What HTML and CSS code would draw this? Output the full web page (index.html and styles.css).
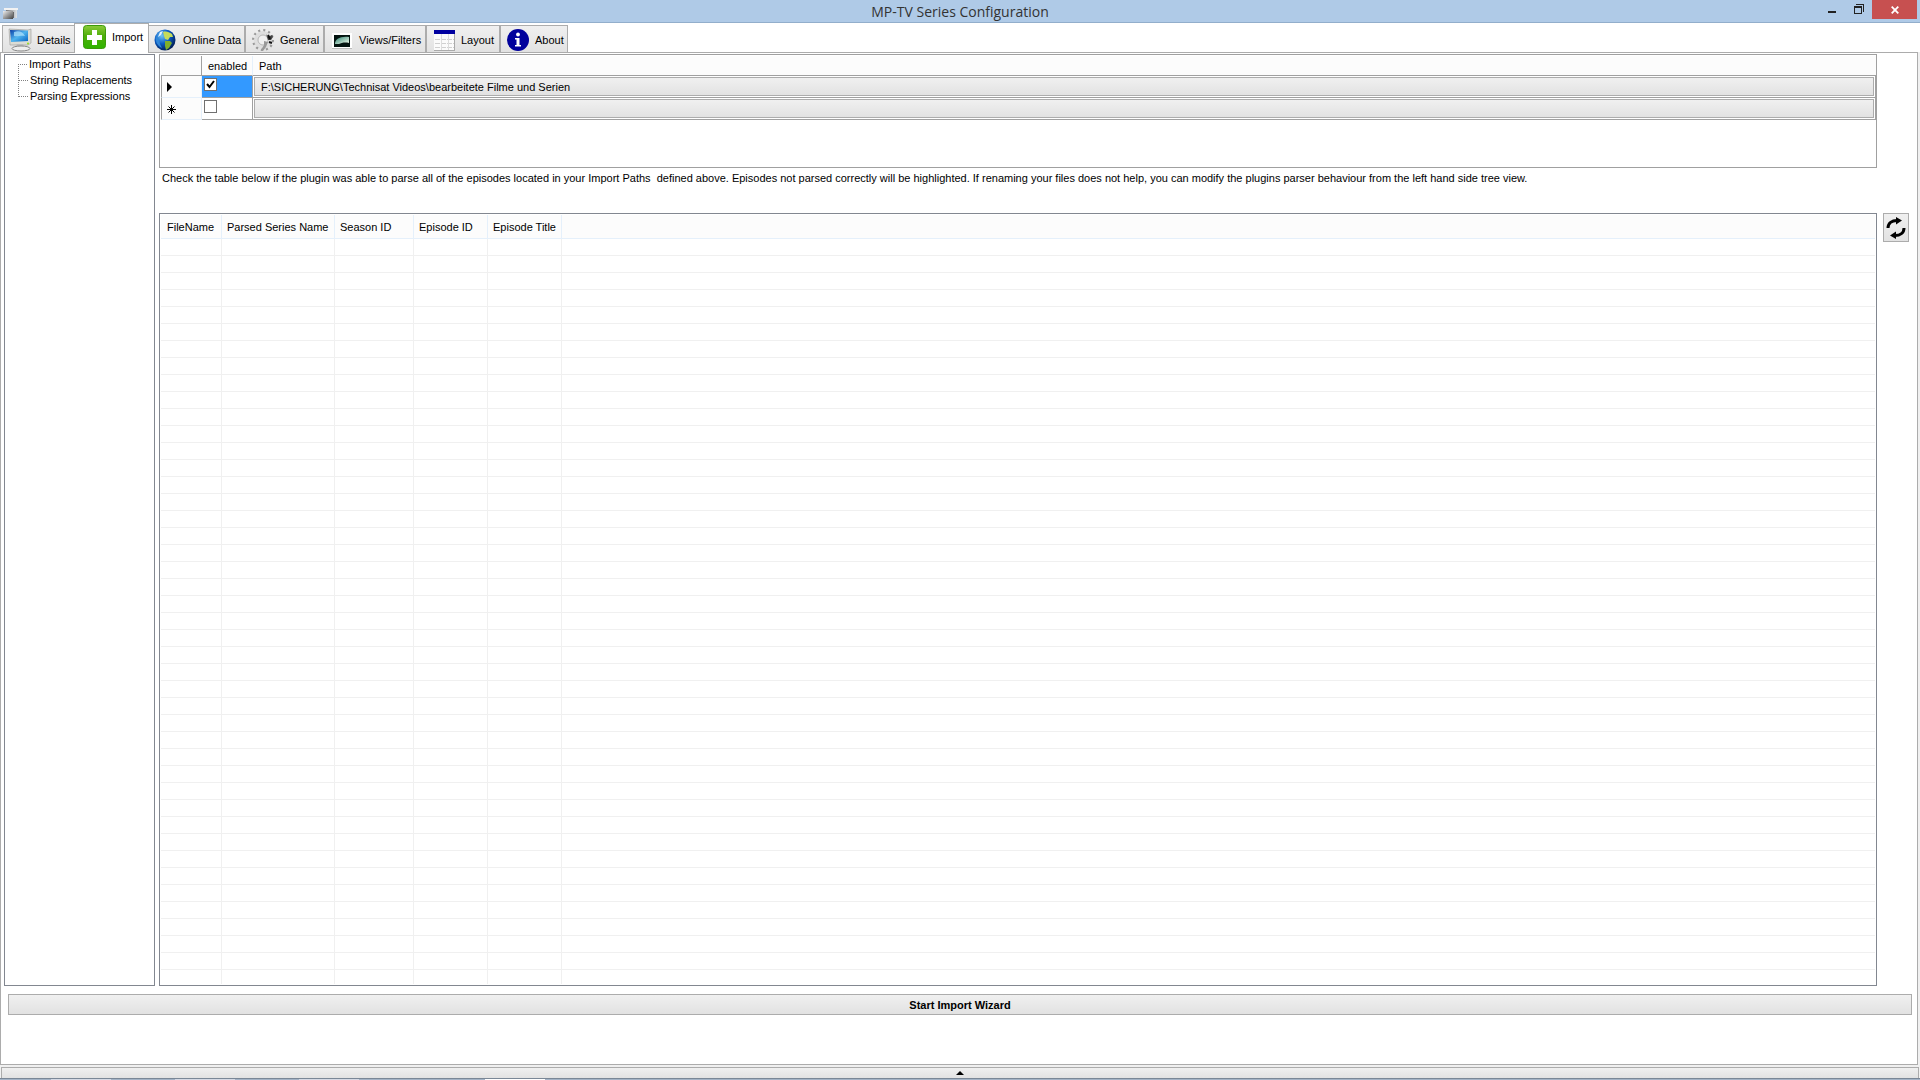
FILE: index.html
```html
<!DOCTYPE html>
<html lang="en">
<head>
  <meta charset="utf-8">
  <title>MP-TV Series Configuration</title>
  <link rel="stylesheet" href="styles.css">
</head>
<body>
  <header class="titlebar">
    <svg class="app-icon" width="16" height="12" viewBox="0 0 16 12">
      <defs>
        <linearGradient id="appA" x1="0" y1="0" x2="1" y2="1"><stop offset="0" stop-color="#eee"/><stop offset="1" stop-color="#444"/></linearGradient>
        <linearGradient id="appB" x1="0" y1="0" x2="1" y2="0"><stop offset="0" stop-color="#777"/><stop offset="1" stop-color="#dde2e6"/></linearGradient>
      </defs>
      <rect x="3" y="0" width="11" height="10" fill="url(#appB)"/>
      <rect x="1" y="0" width="14" height="2" fill="#f2f2f2"/>
      <rect x="0" y="3" width="10" height="8" fill="url(#appA)"/>
      <rect x="10" y="4" width="1" height="6" fill="#666"/>
    </svg>
    <h1>MP-TV Series Configuration</h1>
    <div class="window-buttons">
      <button class="win-btn" aria-label="Minimize">
        <svg width="10" height="10" viewBox="0 0 10 10"><rect x="1" y="7" width="8" height="2" fill="#222"/></svg>
      </button>
      <button class="win-btn" aria-label="Restore">
        <svg width="10" height="10" viewBox="0 0 10 10" shape-rendering="crispEdges">
          <path d="M2 0h8v8h-1V1H2z M0 2h8v8H0z M1 4v5h6V4z" fill="#222" fill-rule="evenodd"/>
        </svg>
      </button>
      <button class="win-btn close" aria-label="Close">
        <svg width="8" height="8" viewBox="0 0 8 8"><path d="M.7.7l6.6 6.6M7.3.7L.7 7.3" stroke="#fff" stroke-width="1.8"/></svg>
      </button>
    </div>
  </header>

  <nav class="tabs">
    <button class="tab tab-details">
      <svg width="24" height="24" viewBox="0 0 24 24">
        <defs>
          <linearGradient id="scr" x1="0" y1="0" x2="1" y2="1"><stop offset="0" stop-color="#0a3fa8"/><stop offset=".5" stop-color="#4fb4ee"/><stop offset="1" stop-color="#0561c4"/></linearGradient>
        </defs>
        <path d="M1 1l19 1 3-1v14l-3 2H2z" fill="#dcdcd4" stroke="#999" stroke-width=".6"/>
        <path d="M2 2l18 .6V13L3 14z" fill="url(#scr)"/>
        <path d="M6 4c5-2 9 0 11 4-4-1-8 1-11 0z" fill="#a5dcfa" opacity=".8"/>
        <path d="M9 16h6l1 3H8z" fill="#bbb"/>
        <ellipse cx="13" cy="20.500" rx="9" ry="2.500" fill="#eee" stroke="#888" stroke-width="1"/>
        <circle cx="20" cy="15.500" r="1" fill="#8fe020"/>
      </svg>
      Details
    </button>
    <button class="tab tab-import active">
      <svg width="24" height="24" viewBox="0 0 24 24">
        <defs>
          <linearGradient id="grn" x1="0" y1="0" x2="0" y2="1"><stop offset="0" stop-color="#8ccb3a"/><stop offset=".45" stop-color="#4fae0a"/><stop offset="1" stop-color="#2fb400"/></linearGradient>
        </defs>
        <rect x=".5" y=".5" width="22" height="23" rx="3" fill="url(#grn)" stroke="#3c9a0a"/>
        <path d="M9 5h5v5h5v5h-5v5H9v-5H4v-5h5z" fill="#fff"/>
      </svg>
      Import
    </button>
    <button class="tab tab-online">
      <svg width="24" height="24" viewBox="0 0 24 24">
        <defs>
          <radialGradient id="sea" cx=".35" cy=".3" r=".75"><stop offset="0" stop-color="#6ec4f4"/><stop offset=".5" stop-color="#0b5cc4"/><stop offset="1" stop-color="#001a50"/></radialGradient>
        </defs>
        <circle cx="11" cy="12" r="10.500" fill="url(#sea)"/>
        <path d="M9 4c3-1 6 0 9 2l1 3-3 0-2 3-3-1-1-3z" fill="#c5dc5a"/>
        <path d="M11 13l5 0 2 2-3 5-3 2-1-4z" fill="#7fae2c"/>
        <path d="M2 9l3 2 1 5 2 4c-4-2-7-6-6-11z" fill="#2f86d8"/>
        <path d="M6 4l3-1-2 4-3 2z" fill="#e4f4ff"/>
      </svg>
      Online Data
    </button>
    <button class="tab tab-general">
      <svg width="24" height="24" viewBox="0 0 24 24">
        <circle cx="12" cy="12" r="9.500" fill="none" stroke="#999" stroke-width="3" stroke-dasharray="2 2.970"/>
        <circle cx="12" cy="12" r="7" fill="none" stroke="#dedede" stroke-width="4"/>
        <circle cx="12" cy="12" r="5" fill="#f0f0f0" stroke="#aaa" stroke-width=".8"/>
        <path d="M15 6l2 3 4-2 1 2-2 3-3 0z" fill="#444"/>
        <path d="M13 13l4 1-2 5-3 4-2-1 3-5z" fill="#999"/>
        <path d="M17 7l2 4M18 14l3 1" stroke="#111" stroke-width="2"/>
      </svg>
      General
    </button>
    <button class="tab tab-views">
      <svg width="24" height="24" viewBox="0 0 24 24">
        <defs>
          <linearGradient id="pic" x1="0" y1="0" x2="1" y2="1"><stop offset="0" stop-color="#2c8371"/><stop offset="1" stop-color="#f8fff0"/></linearGradient>
        </defs>
        <rect x="2" y="5" width="20" height="16" fill="#fff"/>
        <rect x="2" y="20" width="20" height="1" fill="#bbb"/>
        <rect x="4" y="7" width="16" height="12" fill="#031310"/>
        <path d="M5 16c0-5 5-8 14-7v6c-4-1-8 0-10 1z" fill="url(#pic)"/>
      </svg>
      Views/Filters
    </button>
    <button class="tab tab-layout">
      <svg width="24" height="24" viewBox="0 0 24 24" shape-rendering="crispEdges">
        <rect x="2" y="2" width="21" height="21" fill="#fbfbfb"/>
        <rect x="2" y="2" width="21" height="4" fill="#0000a0"/>
        <path d="M3 11.500h20M3 15.500h20M3 19.500h20" stroke="#d0d0d0" stroke-dasharray="5 1"/>
        <path d="M9.500 6v17M16.500 6v17" stroke="#ddd"/>
        <path d="M22.500 6v17M2 22.500h21" stroke="#aaa"/>
      </svg>
      Layout
    </button>
    <button class="tab tab-about">
      <svg width="24" height="24" viewBox="0 0 24 24">
        <circle cx="12" cy="12" r="11" fill="#00009c"/>
        <circle cx="12" cy="6.500" r="1.900" fill="#fff"/>
        <path d="M9 10h4.500v7H15v1.500H9V17h1.500v-5.500H9z" fill="#fff"/>
      </svg>
      About
    </button>
  </nav>

  <main class="page">
    <div class="content">
      <ul class="tree">
        <li><a href="#">Import Paths</a></li>
        <li><a href="#">String Replacements</a></li>
        <li><a href="#">Parsing Expressions</a></li>
      </ul>

      <section class="panel">
        <div class="paths">
          <table class="paths-table">
            <thead>
              <tr><th class="col-mark"></th><th class="col-enabled">enabled</th><th>Path</th></tr>
            </thead>
            <tbody>
              <tr>
                <td class="mark"><svg width="16" height="12" viewBox="0 0 16 12"><path d="M4 1l5 5-5 5z"/></svg></td>
                <td class="selected"><input type="checkbox" aria-label="enabled" checked></td>
                <td><button class="path-btn">F:\SICHERUNG\Technisat Videos\bearbeitete Filme und Serien</button></td>
              </tr>
              <tr>
                <td class="mark"><svg width="16" height="12" viewBox="0 0 16 12"><path d="M8.500 2v9M4 6.500h9M5.500 3.500l6 6M11.500 3.500l-6 6" stroke="#000"/></svg></td>
                <td><input type="checkbox" aria-label="enabled"></td>
                <td><button class="path-btn" aria-label="New path"></button></td>
              </tr>
            </tbody>
          </table>
        </div>

        <p class="hint">Check the table below if the plugin was able to parse all of the episodes located in your Import Paths&nbsp; defined above. Episodes not parsed correctly will be highlighted. If renaming your files does not help, you can modify the plugins parser behaviour from the left hand side tree view.</p>

        <div class="results">
          <div class="list">
            <table class="list-table">
              <thead>
                <tr>
                  <th class="col-file">FileName</th>
                  <th class="col-series">Parsed Series Name</th>
                  <th class="col-season">Season ID</th>
                  <th class="col-episode">Episode ID</th>
                  <th class="col-episode">Episode Title</th>
                  <th></th>
                </tr>
              </thead>
              <tbody>
                <tr><td></td><td></td><td></td><td></td><td></td><td></td></tr>
              </tbody>
            </table>
          </div>
          <button class="refresh" aria-label="Refresh">
            <svg width="20" height="22" viewBox="0 0 20 22">
              <path d="M2 11c0-5 4-7.500 9-7.500" fill="none" stroke="#000" stroke-width="3"/>
              <path d="M10 0l6 3.500-6 4z"/>
              <path d="M18 11c0 5-4 7.500-9 7.500" fill="none" stroke="#000" stroke-width="3"/>
              <path d="M10 14.500l-6 4 6 3.500z"/>
            </svg>
          </button>
        </div>
      </section>
    </div>
    <button class="wizard">Start Import Wizard</button>
  </main>

  <button class="expander" aria-label="Show log">
    <svg width="8" height="4" viewBox="0 0 8 4"><path d="M4 0l4 4H0z"/></svg>
  </button>
  <footer class="taskbar">
    <span class="task"></span>
    <span class="task"></span>
    <span class="task"></span>
    <span class="task current"></span>
  </footer>
</body>
</html>
```

FILE: styles.css
```css
* {
  box-sizing: border-box;
}

body {
  margin: 0;
  height: 100vh;
  display: flex;
  flex-direction: column;
  overflow: hidden;
  background-color: #f0f0f0;
  color: #000;
  font-family: "Liberation Sans", Arial, sans-serif;
  font-size: 11px;
  line-height: 16px;
}

button {
  font: inherit;
  color: inherit;
  padding: 0;
  border: 1px solid #acacac;
  background: linear-gradient(#f0f0f0, #e2e2e2);
}

svg {
  display: block;
  flex: none;
}

table {
  width: 100%;
  border-collapse: separate;
  border-spacing: 0;
  table-layout: fixed;
}

th {
  font-weight: normal;
  text-align: left;
  background-color: #fcfcfc;
}

/* Title bar */
.titlebar {
  display: grid;
  grid-template-columns: 1fr auto 1fr;
  height: 23px;
  padding: 0 3px;
  background-color: #afcae7;
  border-bottom: 1px solid #92aecb;
}

.app-icon {
  align-self: center;
  margin-top: 3px;
}

.titlebar h1 {
  margin: 0;
  font-family: "Open Sans", sans-serif;
  font-size: 14px;
  font-weight: normal;
  line-height: 24px;
  color: #333;
}

.window-buttons {
  display: flex;
  justify-content: flex-end;
}

.win-btn {
  display: flex;
  align-items: center;
  justify-content: center;
  width: 27px;
  height: 18px;
  border: none;
  background: none;
}

.win-btn.close {
  width: 45px;
  height: 19px;
  background-color: #c75050;
}

/* Tabs */
.tabs {
  display: flex;
  align-items: flex-end;
  height: 29px;
  padding-left: 2px;
  background-color: #fff;
}

.tab {
  display: flex;
  align-items: center;
  gap: 5px;
  height: 27px;
  padding: 1px 0 0 5px;
  border-bottom: none;
  white-space: nowrap;
}

.tab.active {
  position: relative;
  height: 30px;
  margin: 0 -1px -1px;
  padding: 0 0 4px 8px;
  background: #fff;
}

.tab-details {
  width: 73px;
}

.tab-import {
  width: 75px;
}

.tab-online {
  width: 97px;
}

.tab-general {
  width: 79px;
}

.tab-views {
  width: 102px;
}

.tab-layout {
  width: 74px;
}

.tab-about {
  width: 68px;
}

/* Tab page */
.page {
  flex: 1;
  display: flex;
  flex-direction: column;
  min-height: 0;
  margin-right: 2px;
  padding: 1px 5px 49px 3px;
  border: 1px solid #acacac;
  background-color: #fff;
}

.content {
  flex: 1;
  display: flex;
  gap: 4px;
  min-height: 0;
}

.tree {
  width: 151px;
  margin: 0;
  padding: 1px 0 0 13px;
  border: 1px solid #828790;
  list-style: none;
}

.tree li {
  display: flex;
  height: 16px;
}

.tree li::before {
  content: "";
  width: 9px;
  height: 16px;
  margin: -8px 2px 0 0;
  border-left: 1px dotted #808080;
  border-bottom: 1px dotted #808080;
}

.tree li:first-child::before {
  height: 1px;
  margin-top: 7px;
  border-left: none;
}

.tree a {
  color: #000;
  text-decoration: none;
  white-space: nowrap;
}

.panel {
  flex: 1;
  display: flex;
  flex-direction: column;
  min-width: 0;
}

/* Import paths */
.paths {
  height: 114px;
  margin-right: 35px;
  padding: 1px 0 0 1px;
  border: 1px solid #a0a0a0;
}

.paths-table th {
  height: 20px;
  padding: 0 6px;
  border-bottom: 1px solid #a0a0a0;
}

.paths-table .col-mark {
  width: 41px;
  border-right: 1px solid #a0a0a0;
}

.paths-table .col-enabled {
  width: 51px;
  border-right: 1px solid #e5f0fb;
}

.paths-table td {
  height: 22px;
  padding: 1px;
  vertical-align: top;
  border-right: 1px solid #a0a0a0;
  border-bottom: 1px solid #a0a0a0;
}

.paths-table .mark {
  padding: 5px 0 0 1px;
  background-color: #fcfcfc;
  border-left: 1px solid #a0a0a0;
  border-right-color: #e5f0fb;
  border-bottom-color: #e5f0fb;
}

.paths-table .selected {
  background-color: #3399ff;
}

.paths-table input {
  appearance: none;
  display: block;
  width: 13px;
  height: 13px;
  margin: 1px;
  border: 1px solid #707070;
  background-color: #fff;
}

.paths-table input:checked {
  background-image: url("data:image/svg+xml,%3Csvg xmlns='http://www.w3.org/2000/svg' viewBox='0 0 11 11'%3E%3Cpath d='M2 5l2.500 3L9 2' fill='none' stroke='%23000' stroke-width='2'/%3E%3C/svg%3E");
}

.path-btn {
  display: block;
  width: 100%;
  height: 19px;
  padding-left: 6px;
  text-align: left;
}

.hint {
  height: 45px;
  margin: 0;
  padding: 2px 3px 0;
}

/* Parsed episodes */
.results {
  flex: 1;
  display: flex;
  align-items: flex-start;
  gap: 6px;
  min-height: 0;
  padding-right: 3px;
}

.list {
  flex: 1;
  align-self: stretch;
  padding: 1px;
  border: 1px solid #828790;
}

.list-table {
  height: 100%;
}

.list-table th {
  height: 24px;
  padding: 1px 0 0 6px;
  border-right: 1px solid #e5f0fb;
  border-bottom: 1px solid #e5f0fb;
  white-space: nowrap;
}

.list-table th + th {
  padding-left: 5px;
}

.list-table td {
  border-right: 1px solid #f0f0f0;
  background: repeating-linear-gradient(transparent 0 16px, #f0f0f0 16px 17px);
}

.list-table th:last-child,
.list-table td:last-child {
  border-right: none;
}

.col-file {
  width: 61px;
}

.col-series {
  width: 113px;
}

.col-season {
  width: 79px;
}

.col-episode {
  width: 74px;
}

.refresh {
  display: flex;
  align-items: center;
  justify-content: center;
  width: 26px;
  height: 29px;
}

.wizard {
  height: 21px;
  margin: 8px 0 0 4px;
  font-weight: bold;
}

/* Collapsed log panel */
.expander {
  display: flex;
  align-items: center;
  justify-content: center;
  height: 11px;
  margin: 2px 1px 0;
  border-bottom: none;
}

.taskbar {
  display: flex;
  gap: 64px;
  height: 2px;
  padding-left: 51px;
  background-color: #a3b3c6;
  border-top: 1px solid #7a8796;
}

.task {
  width: 60px;
  background-color: #d5d9e4;
}

.task.current {
  margin-left: 62px;
  background-color: #fff;
}
```
